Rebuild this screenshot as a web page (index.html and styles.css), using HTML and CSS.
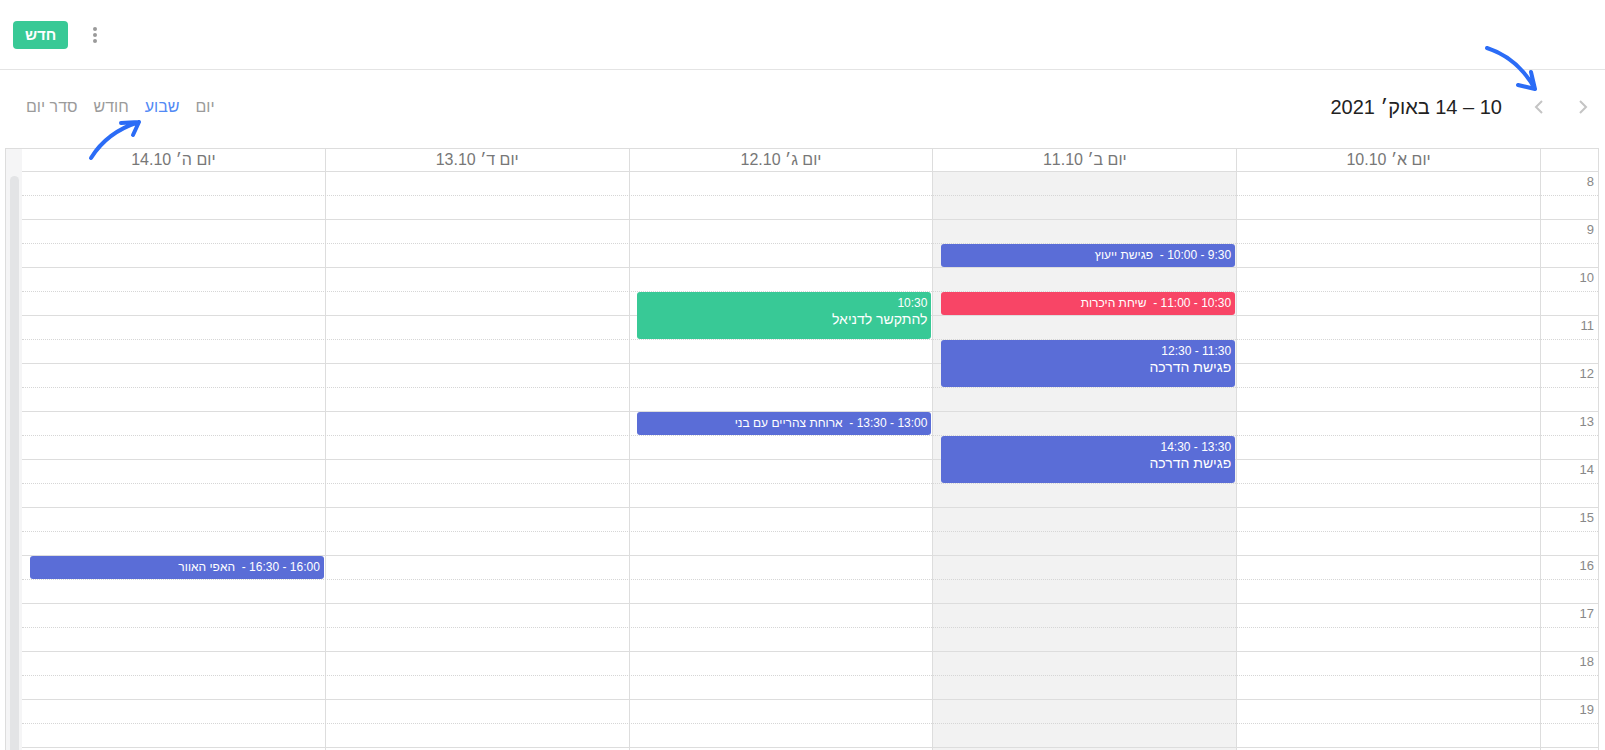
FILE: index.html
```html
<!DOCTYPE html>
<html lang="he" dir="rtl">
  <head>
    <meta charset="UTF-8" />
    <meta name="viewport" content="width=device-width, initial-scale=1.0" />
    <title>יומן</title>
    <link rel="stylesheet" href="styles.css">
  </head>
  <body>
    <header class="topbar">
      <button type="button" class="more-button" aria-label="עוד">
        <svg width="4" height="16" viewBox="0 0 4 16">
          <circle cx="2" cy="2" r="2" />
          <circle cx="2" cy="8" r="2" />
          <circle cx="2" cy="14" r="2" />
        </svg>
      </button>
      <button type="button" class="new-button">חדש</button>
    </header>

    <div class="toolbar">
      <div class="nav">
        <button type="button" class="chev-button" aria-label="הקודם">
          <svg width="10" height="14" viewBox="0 0 10 14"><path d="M2 1 L8 7 L2 13" /></svg>
        </button>
        <button type="button" class="chev-button" aria-label="הבא">
          <svg width="10" height="14" viewBox="0 0 10 14"><path d="M8 1 L2 7 L8 13" /></svg>
        </button>
        <h2 class="range-title">10 – 14 באוק׳ 2021</h2>
      </div>
      <nav class="views">
        <a>יום</a>
        <a class="active">שבוע</a>
        <a>חודש</a>
        <a>סדר יום</a>
      </nav>
    </div>

    <div class="calendar">
      <div class="cal-main">
        <div class="cal-head">
          <div class="axis-head"></div>
          <div class="day-head">יום א׳ 10.10</div>
          <div class="day-head">יום ב׳ 11.10</div>
          <div class="day-head">יום ג׳ 12.10</div>
          <div class="day-head">יום ד׳ 13.10</div>
          <div class="day-head">יום ה׳ 14.10</div>
        </div>
        <div class="cal-body">
          <div class="day-col" style="grid-column: 2"></div>
          <div class="day-col today" style="grid-column: 3"></div>
          <div class="day-col" style="grid-column: 4"></div>
          <div class="day-col" style="grid-column: 5"></div>
          <div class="day-col" style="grid-column: 6"></div>

          <div class="slats">
            <div class="slat"><span class="slat-label">8</span></div><div class="slat half"></div>
            <div class="slat"><span class="slat-label">9</span></div><div class="slat half"></div>
            <div class="slat"><span class="slat-label">10</span></div><div class="slat half"></div>
            <div class="slat"><span class="slat-label">11</span></div><div class="slat half"></div>
            <div class="slat"><span class="slat-label">12</span></div><div class="slat half"></div>
            <div class="slat"><span class="slat-label">13</span></div><div class="slat half"></div>
            <div class="slat"><span class="slat-label">14</span></div><div class="slat half"></div>
            <div class="slat"><span class="slat-label">15</span></div><div class="slat half"></div>
            <div class="slat"><span class="slat-label">16</span></div><div class="slat half"></div>
            <div class="slat"><span class="slat-label">17</span></div><div class="slat half"></div>
            <div class="slat"><span class="slat-label">18</span></div><div class="slat half"></div>
            <div class="slat"><span class="slat-label">19</span></div><div class="slat half"></div>
            <div class="slat"></div><div class="slat half"></div>
          </div>

          <!-- events: grid-row = half-hour slot from 8:00 -->
          <div class="event blue" style="grid-area: 4 / 3 / span 1">
            <span class="ev-time">9:30 - 10:00 -&nbsp;</span> <span class="ev-name">פגישת ייעוץ</span>
          </div>
          <div class="event red" style="grid-area: 6 / 3 / span 1">
            <span class="ev-time">10:30 - 11:00 -&nbsp;</span> <span class="ev-name">שיחת היכרות</span>
          </div>
          <div class="event blue long" style="grid-area: 8 / 3 / span 2">
            <span class="ev-time">11:30 - 12:30</span>
            <span class="ev-name">פגישת הדרכה</span>
          </div>
          <div class="event blue long" style="grid-area: 12 / 3 / span 2">
            <span class="ev-time">13:30 - 14:30</span>
            <span class="ev-name">פגישת הדרכה</span>
          </div>
          <div class="event green long" style="grid-area: 6 / 4 / span 2">
            <span class="ev-time">10:30</span>
            <span class="ev-name">להתקשר לדניאל</span>
          </div>
          <div class="event blue" style="grid-area: 11 / 4 / span 1">
            <span class="ev-time">13:00 - 13:30 -&nbsp;</span> <span class="ev-name">ארוחת צהריים עם בני</span>
          </div>
          <div class="event blue" style="grid-area: 17 / 6 / span 1">
            <span class="ev-time">16:00 - 16:30 -&nbsp;</span> <span class="ev-name">האפי האוור</span>
          </div>
        </div>
      </div>
      <div class="scroll-gutter"><div class="scroll-thumb"></div></div>
    </div>

    <svg class="annotations" width="1605" height="180" viewBox="0 0 1605 180">
      <path d="M1487 48 Q1518 58 1535 89 M1535 89 L1531 72 M1535 89 L1518 85" />
      <path d="M91 158 Q107 132 139 122 M139 122 L121 123 M139 122 L133 135" />
    </svg>
  </body>
</html>
```

FILE: styles.css
```css
*,
*::before,
*::after {
  box-sizing: border-box;
}

html,
body {
  margin: 0;
  height: 100%;
}

body {
  font-family: "Liberation Sans", "DejaVu Sans", sans-serif;
  color: #222;
  background: #fff;
  overflow: hidden;
}

button {
  all: unset;
  cursor: pointer;
}

/* top bar */

.topbar {
  display: flex;
  align-items: center;
  justify-content: flex-end;
  gap: 17px;
  height: 70px;
  padding: 0 13px;
  border-bottom: 1px solid #e4e4e4;
}

.new-button {
  height: 28px;
  line-height: 28px;
  padding: 0 12px;
  border-radius: 4px;
  background: #38c996;
  color: #fff;
  font-size: 15px;
  font-weight: bold;
}

.more-button {
  display: grid;
  place-items: center;
  width: 20px;
  height: 24px;
}

.more-button svg {
  fill: #9a9a9a;
}

/* toolbar */

.toolbar {
  display: flex;
  align-items: center;
  justify-content: space-between;
  height: 78px;
  padding: 0 6px 4px 26px;
}

.nav {
  display: flex;
  align-items: center;
  gap: 12px;
}

.chev-button {
  display: grid;
  place-items: center;
  width: 32px;
  height: 32px;
}

.chev-button svg {
  fill: none;
  stroke: #c4c4c4;
  stroke-width: 2;
}

.range-title {
  margin: 0 9px 0 0;
  font-size: 20px;
  font-weight: normal;
  color: #222;
}

.views {
  display: flex;
  gap: 16px;
  font-size: 16px;
  color: #9b9b9b;
}

.views a.active {
  color: #5289f5;
}

/* calendar */

.calendar {
  display: flex;
  margin: 0 6px 0 5px;
  border: 1px solid #ddd;
}

.cal-main {
  flex: 1;
  min-width: 0;
}

.cal-head,
.cal-body {
  display: grid;
  grid-template-columns: 57px repeat(5, 1fr);
}

.cal-head {
  height: 23px;
  border-bottom: 1px solid #ddd;
}

.day-head {
  border-right: 1px solid #ddd;
  text-align: center;
  font-size: 16px;
  line-height: 22px;
  color: #777;
}

.cal-body {
  grid-template-rows: repeat(26, 24px);
}

.day-col {
  grid-row: 1 / -1;
  border-right: 1px solid #ddd;
}

.day-col.today {
  background: #f2f2f2;
}

.slats {
  grid-area: 1 / 1 / -1 / -1;
}

.slat {
  height: 24px;
  border-bottom: 1px dotted #d6d6d6;
}

.slat.half {
  border-bottom: 1px solid #ddd;
}

.slat-label {
  display: block;
  width: 57px;
  padding: 2px 4px 0 0;
  font-size: 13px;
  line-height: 15px;
  color: #888;
}

/* events */

.event {
  margin: 0 2px 1px 2.5%;
  padding: 3px 4px 0;
  border-radius: 3px;
  color: #fff;
  font-size: 12px;
  line-height: 16px;
  white-space: nowrap;
  overflow: hidden;
}

.event.blue {
  background: #5a6dd7;
}

.event.red {
  background: #f84566;
}

.event.green {
  background: #38c996;
}

.event.long .ev-time,
.event.long .ev-name {
  display: block;
}

.event.long .ev-name {
  font-size: 14px;
  line-height: 17px;
}

/* fake scrollbar on the left (rtl) */

.scroll-gutter {
  flex: none;
  width: 16px;
  background: #f5f5f6;
}

.scroll-thumb {
  height: 620px;
  margin: 27px 3px 0 4px;
  border-radius: 5px 5px 0 0;
  background: #e3e4e6;
}

/* hand-drawn hint arrows */

.annotations {
  position: absolute;
  top: 0;
  left: 0;
  pointer-events: none;
}

.annotations path {
  fill: none;
  stroke: #2b6cf6;
  stroke-width: 4;
  stroke-linecap: round;
  stroke-linejoin: round;
}
```
